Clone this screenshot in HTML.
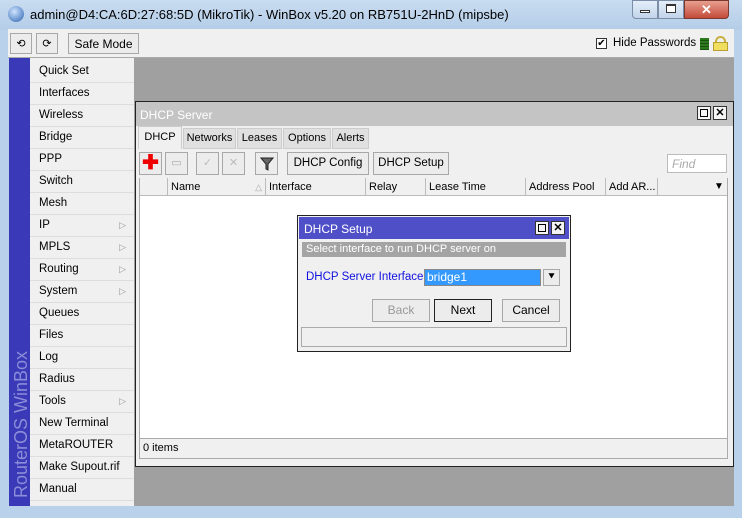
<!DOCTYPE html><html><head><style>
*{box-sizing:border-box;margin:0;padding:0}
body{width:742px;height:518px;overflow:hidden;background:#b9d1ea;font-family:"Liberation Sans",sans-serif;font-size:11px;color:#000;position:relative;white-space:nowrap}
.a{position:absolute}
.btn{position:absolute;background:#ececec;border:1px solid #a8a8a8;text-align:center;line-height:20px}
.mi{position:absolute;left:30px;width:104px;height:22px;border-bottom:1px solid #ddd;background:#f0f0f0;padding-left:9px;line-height:21px;font-size:11.5px}
.arr{position:absolute;right:8px;top:0px;color:#999;font-size:9px}
.tab{position:absolute;top:128px;height:21px;background:#e0e0e0;border:1px solid #ccc;line-height:19px;text-align:center}
.th{position:absolute;top:178px;height:18px;border-right:1px solid #bbb;line-height:18px;padding-left:3px;overflow:hidden}
</style></head><body>
<div class="a" style="left:0;top:0;width:742px;height:30px;background:linear-gradient(#c9dcf0,#b4cde8)"></div>
<div class="a" style="left:8px;top:6px;width:16px;height:16px;border-radius:50%;background:radial-gradient(circle at 40% 35%,#cfe3ff,#2a62b0)"></div>
<div class="a" style="left:30px;top:7px;font-size:13px">admin@D4:CA:6D:27:68:5D (MikroTik) - WinBox v5.20 on RB751U-2HnD (mipsbe)</div>
<div class="a" style="left:632px;top:0;width:26px;height:19px;border:1px solid #7a8ea8;border-radius:0 0 0 4px;background:linear-gradient(#e4eef9,#c2d4ea)"></div>
<div class="a" style="left:640px;top:10px;width:10px;height:3px;border:1px solid #333;background:#fff"></div>
<div class="a" style="left:658px;top:0;width:26px;height:19px;border:1px solid #7a8ea8;background:linear-gradient(#e4eef9,#c2d4ea)"></div>
<div class="a" style="left:666px;top:4px;width:10px;height:9px;border:1px solid #333;border-top-width:2px;background:#fff"></div>
<div class="a" style="left:684px;top:0;width:45px;height:19px;border:1px solid #7a3a30;border-radius:0 0 4px 0;background:linear-gradient(#e8a090,#c44b3a);color:#fff;text-align:center;font-weight:bold;font-size:13px;line-height:17px">✕</div>
<div class="a" style="left:8px;top:29px;width:726px;height:29px;background:#f0f0f0;border-bottom:1px solid #aaa"></div>
<div class="btn" style="left:10px;top:33px;width:22px;height:21px">⟲</div>
<div class="btn" style="left:36px;top:33px;width:22px;height:21px">⟳</div>
<div class="btn" style="left:68px;top:33px;width:71px;height:21px;font-size:12px">Safe Mode</div>
<div class="a" style="left:596px;top:38px;width:11px;height:11px;border:1px solid #333;background:#fff;font-size:10px;line-height:9px;text-align:center">✔</div>
<div class="a" style="left:613px;top:37px;font-size:11.5px">Hide Passwords</div>
<div class="a" style="left:700px;top:38px;width:9px;height:12px;background:repeating-linear-gradient(#2d7a1e 0 2px,#1a5010 2px 3px)"></div>
<div class="a" style="left:715px;top:36px;width:11px;height:10px;border:2px solid #c8b040;border-bottom:none;border-radius:6px 6px 0 0"></div>
<div class="a" style="left:713px;top:42px;width:15px;height:9px;background:#f0de60;border:1px solid #b8a030"></div>
<div class="a" style="left:9px;top:58px;width:21px;height:448px;background:#3a3ab8"></div>
<div class="a" style="left:11px;top:498px;transform:rotate(-90deg);transform-origin:0 0;color:#8c8cd8;font-size:18px;white-space:nowrap;width:170px">RouterOS WinBox</div>
<div class="a" style="left:30px;top:58px;width:104px;height:448px;background:#f0f0f0"></div>
<div class="mi" style="top:61px">Quick Set</div><div class="mi" style="top:83px">Interfaces</div><div class="mi" style="top:105px">Wireless</div><div class="mi" style="top:127px">Bridge</div><div class="mi" style="top:149px">PPP</div><div class="mi" style="top:171px">Switch</div><div class="mi" style="top:193px">Mesh</div><div class="mi" style="top:215px">IP<span class="arr">▷</span></div><div class="mi" style="top:237px">MPLS<span class="arr">▷</span></div><div class="mi" style="top:259px">Routing<span class="arr">▷</span></div><div class="mi" style="top:281px">System<span class="arr">▷</span></div><div class="mi" style="top:303px">Queues</div><div class="mi" style="top:325px">Files</div><div class="mi" style="top:347px">Log</div><div class="mi" style="top:369px">Radius</div><div class="mi" style="top:391px">Tools<span class="arr">▷</span></div><div class="mi" style="top:413px">New Terminal</div><div class="mi" style="top:435px">MetaROUTER</div><div class="mi" style="top:457px">Make Supout.rif</div><div class="mi" style="top:479px">Manual</div>
<div class="a" style="left:134px;top:58px;width:600px;height:448px;background:#a0a0a0"></div>
<div class="a" style="left:135px;top:101px;width:599px;height:366px;background:#f0f0f0;border:1px solid #222"></div>
<div class="a" style="left:136px;top:102px;width:597px;height:24px;background:#c4c4c4;color:#fff;font-size:12px;padding:6px 0 0 4px">DHCP Server</div>
<div class="a" style="left:697px;top:106px;width:14px;height:14px;border:1px solid #333;background:#f4f4f4"></div><div class="a" style="left:700px;top:109px;width:8px;height:8px;border:1px solid #000"></div>
<div class="a" style="left:713px;top:106px;width:14px;height:14px;border:1px solid #333;background:#f4f4f4;font-size:11px;font-weight:bold;text-align:center;line-height:12px">✕</div>
<div class="tab" style="left:138px;width:44px;background:#f0f0f0;border-bottom:none;top:126px;height:23px;line-height:21px">DHCP</div>
<div class="tab" style="left:183px;width:53px">Networks</div><div class="tab" style="left:237px;width:45px">Leases</div><div class="tab" style="left:283px;width:48px">Options</div><div class="tab" style="left:332px;width:37px">Alerts</div>
<div class="btn" style="left:139px;top:152px;width:23px;height:23px;color:#e00;font-weight:bold;font-size:20px;line-height:20px">✚</div>
<div class="btn" style="left:165px;top:152px;width:23px;height:23px;color:#aaa">▭</div>
<div class="btn" style="left:196px;top:152px;width:23px;height:23px;color:#bbb">✓</div>
<div class="btn" style="left:222px;top:152px;width:23px;height:23px;color:#bbb">✕</div>
<div class="btn" style="left:255px;top:152px;width:23px;height:23px"><svg width="14" height="16" viewBox="0 0 14 16" style="margin-top:3px"><path d="M1 2h12L8 8v6l-2-1V8z" fill="#666" stroke="#222"/></svg></div>
<div class="btn" style="left:287px;top:152px;width:82px;height:23px;font-size:11.5px">DHCP Config</div>
<div class="btn" style="left:373px;top:152px;width:76px;height:23px;font-size:11.5px">DHCP Setup</div>
<div class="a" style="left:667px;top:154px;width:60px;height:19px;background:#fff;border:1px solid #bbb;color:#aaa;font-style:italic;padding:2px 4px;font-size:12px">Find</div>
<div class="a" style="left:139px;top:178px;width:589px;height:261px;background:#fff;border:1px solid #aaa"></div>
<div class="a" style="left:140px;top:178px;width:587px;height:18px;background:#f0f0f0;border-bottom:1px solid #bbb"></div>
<div class="th" style="left:140px;width:28px"></div><div class="th" style="left:168px;width:98px">Name<span style="position:absolute;right:3px;color:#aaa;font-size:9px">△</span></div><div class="th" style="left:266px;width:100px">Interface</div><div class="th" style="left:366px;width:60px">Relay</div><div class="th" style="left:426px;width:100px">Lease Time</div><div class="th" style="left:526px;width:80px">Address Pool</div><div class="th" style="left:606px;width:52px">Add AR...</div>
<div class="a" style="left:714px;top:181px;font-size:10px">▼</div>
<div class="a" style="left:139px;top:439px;width:589px;height:20px;border:1px solid #aaa;border-top:none;padding:3px">0 items</div>
<div class="a" style="left:297px;top:215px;width:274px;height:137px;background:#f0f0f0;border:1px solid #222"></div>
<div class="a" style="left:299px;top:217px;width:270px;height:22px;background:#4f4fc8;color:#fff;font-size:12px;padding:5px 0 0 5px">DHCP Setup</div>
<div class="a" style="left:535px;top:221px;width:14px;height:14px;border:1px solid #333;background:#f4f4f4"></div><div class="a" style="left:538px;top:224px;width:8px;height:8px;border:1px solid #000"></div>
<div class="a" style="left:551px;top:221px;width:14px;height:14px;border:1px solid #333;background:#f4f4f4;font-size:11px;font-weight:bold;text-align:center;line-height:12px">✕</div>
<div class="a" style="left:302px;top:242px;width:264px;height:15px;background:#a4a4a4;color:#fff;padding-left:4px;line-height:15px">Select interface to run DHCP server on</div>
<div class="a" style="left:306px;top:271px;color:#1010e0;font-size:11.5px">DHCP Server Interface:</div>
<div class="a" style="left:424px;top:269px;width:117px;height:17px;background:#3399ff;color:#fff;border:1px solid #888;padding-left:2px;line-height:15px;font-size:12px">bridge1</div>
<div class="btn" style="left:543px;top:269px;width:17px;height:17px;line-height:14px;font-size:11px">⯆</div>
<div class="btn" style="left:372px;top:299px;width:58px;height:23px;color:#999;font-size:12px">Back</div>
<div class="btn" style="left:434px;top:299px;width:58px;height:23px;border:1px solid #222;font-size:12px">Next</div>
<div class="btn" style="left:502px;top:299px;width:58px;height:23px;font-size:12px">Cancel</div>
<div class="a" style="left:301px;top:327px;width:266px;height:20px;border:1px solid #aaa"></div>
</body></html>
